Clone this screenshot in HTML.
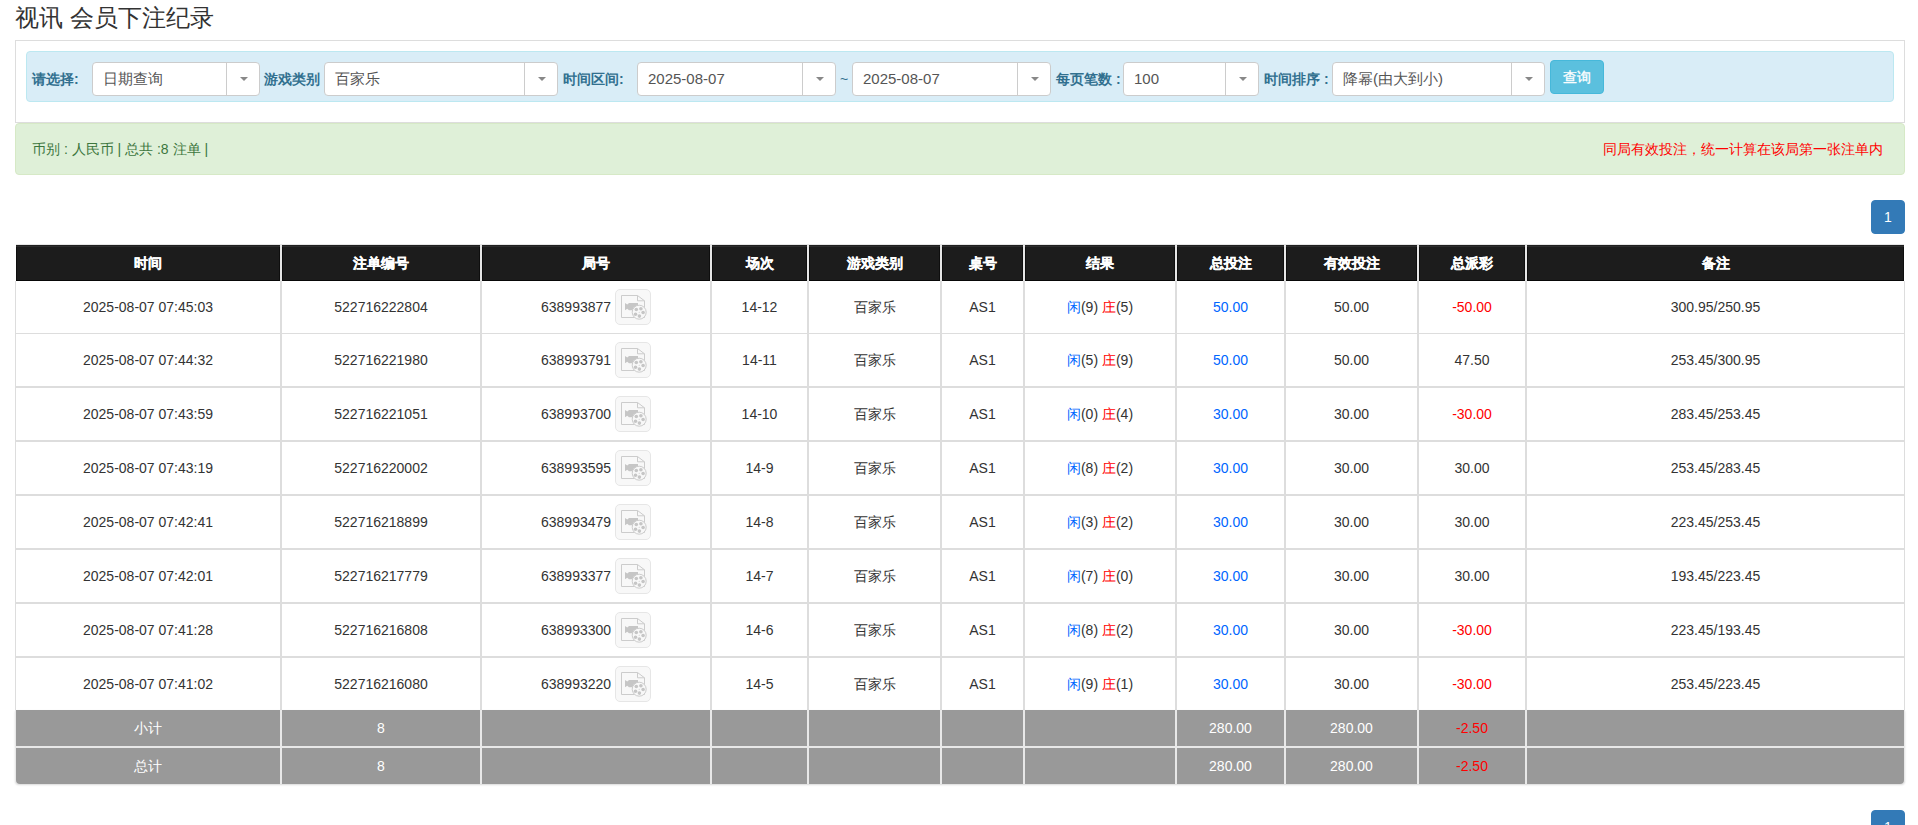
<!DOCTYPE html>
<html><head><meta charset="utf-8">
<style>
*{box-sizing:border-box;margin:0;padding:0}
html,body{width:1918px;height:825px;overflow:hidden;background:#fff}
body{font-family:"Liberation Sans",sans-serif;font-size:14px;color:#333;position:relative}
.abs{position:absolute}
#title{left:15px;top:1px;font-size:24px;line-height:34px;color:#333;white-space:nowrap}
#box{left:15px;top:40px;width:1890px;height:83px;border:1px solid #ddd}
#panel{left:26px;top:51px;width:1868px;height:51px;background:#d9edf7;border:1px solid #bce8f1;border-radius:4px}
.lbl{position:absolute;top:62px;height:34px;line-height:34px;font-weight:bold;color:#31708f;font-size:14px;white-space:nowrap}
.sel{position:absolute;top:62px;height:34px;background:#fff;border:1px solid #ccc;border-radius:4px}
.sel .t{position:absolute;left:10px;top:0;line-height:32px;font-size:15px;color:#555;white-space:nowrap}
.sel .d{position:absolute;top:0;bottom:0;width:1px;background:#ccc}
.sel .a{position:absolute;top:14px;width:0;height:0;border-left:4px solid transparent;border-right:4px solid transparent;border-top:4px solid #888}
#btn{left:1550px;top:60px;width:54px;height:34px;background:#5bc0de;border:1px solid #46b8da;border-radius:4px;color:#fff;text-align:center;line-height:32px;font-size:14px;-webkit-text-stroke:0.35px #fff}
#alert{left:15px;top:123px;width:1890px;height:52px;background:#dff0d8;border:1px solid #d6e9c6;border-radius:4px}
#alert .l{position:absolute;left:16px;top:0;line-height:50px;color:#3c763d;font-size:14px;white-space:nowrap}
#alert .r{position:absolute;right:21px;top:0;line-height:50px;color:#f00;font-size:14px;white-space:nowrap}
.pg{position:absolute;left:1871px;width:34px;height:34px;background:#337ab7;border:1px solid #337ab7;border-radius:4px;color:#fff;text-align:center;line-height:32px;font-size:14px}

.th{position:absolute;top:245px;-webkit-text-stroke:0.25px #fff;height:36px;background:#1c1c1c;color:#fff;font-weight:bold;text-align:center;line-height:36px;box-shadow:inset 0 1px 0 #1f1f1f,inset 0 2px 0 #2d2d2d,inset 0 -1px 0 #080808,inset 1px 0 0 #0e0e0e,inset -1px 0 0 #0e0e0e;white-space:nowrap}
.td{position:absolute;height:52px;line-height:52px;text-align:center;color:#333;white-space:nowrap}
.tf{position:absolute;height:36px;line-height:36px;text-align:center;color:#fff;background:#999;white-space:nowrap}
.bl{color:#0066ff}.rd{color:#f00}
.ic{display:inline-block;width:36px;height:36px;vertical-align:middle;position:relative;top:-1px}
.ic svg{display:block}
</style></head><body>
<div id="title" class="abs">视讯 会员下注纪录</div>
<div id="box" class="abs"></div>
<div id="panel" class="abs"></div>
<div class="lbl" style="left:32px">请选择:</div>
<div class="sel" style="left:92px;width:168px"><span class="t">日期查询</span><span class="d" style="left:133px"></span><span class="a" style="left:147px"></span></div>
<div class="lbl" style="left:264px">游戏类别</div>
<div class="sel" style="left:324px;width:234px"><span class="t">百家乐</span><span class="d" style="left:199px"></span><span class="a" style="left:213px"></span></div>
<div class="lbl" style="left:563px">时间区间:</div>
<div class="sel" style="left:637px;width:199px"><span class="t">2025-08-07</span><span class="d" style="left:164px"></span><span class="a" style="left:178px"></span></div>
<div class="lbl" style="left:840px;font-weight:normal;color:#31708f">~</div>
<div class="sel" style="left:852px;width:199px"><span class="t">2025-08-07</span><span class="d" style="left:164px"></span><span class="a" style="left:178px"></span></div>
<div class="lbl" style="left:1056px">每页笔数 :</div>
<div class="sel" style="left:1123px;width:136px"><span class="t">100</span><span class="d" style="left:101px"></span><span class="a" style="left:115px"></span></div>
<div class="lbl" style="left:1264px">时间排序 :</div>
<div class="sel" style="left:1332px;width:213px"><span class="t">降幂(由大到小)</span><span class="d" style="left:178px"></span><span class="a" style="left:192px"></span></div>
<div id="btn" class="abs">查询</div>
<div id="alert" class="abs"><span class="l">币别 : 人民币 | 总共 :8 注单 |</span><span class="r">同局有效投注，统一计算在该局第一张注单内</span></div>
<div class="pg" style="top:200px">1</div>
<div class="pg" style="top:810px">1</div>
<svg width="0" height="0" style="position:absolute"><defs><symbol id="vid" viewBox="0 0 36 36">
<rect x="0.5" y="0.5" width="35" height="35" rx="4.5" fill="#f8f8f8" stroke="#e6e6e6"/>
<path d="M6.5 6.5H22.5L29.5 11.8V28.5H6.5Z" fill="#f8f8f8" stroke="#cccccc"/>
<path d="M22.5 6.5V11.8H29.5" fill="none" stroke="#cccccc"/>
<path d="M10 14L12.3 15.6L14 14H23V21.3H14L12.3 19.7L10 21.3Z" fill="#c6c6c6"/>
<circle cx="24.2" cy="23.2" r="7" fill="#f8f8f8" stroke="#cccccc"/>
<circle cx="21.3" cy="20.5" r="1.8" fill="#c6c6c6"/><circle cx="25.9" cy="19.8" r="1.8" fill="#c6c6c6"/>
<circle cx="28.1" cy="23.5" r="1.8" fill="#c6c6c6"/><circle cx="24.4" cy="27.1" r="1.8" fill="#c6c6c6"/>
<circle cx="20.5" cy="25.2" r="1.8" fill="#c6c6c6"/><circle cx="24.2" cy="23.2" r="0.5" fill="#c6c6c6"/>
</symbol></defs></svg>
<div class="abs" style="left:15px;top:281px;width:1890px;height:429px;background:#fff;border-left:1px solid #ddd;border-right:1px solid #ddd"></div>
<div class="abs" style="left:16px;top:333px;width:1888px;height:1px;background:#ddd"></div>
<div class="abs" style="left:16px;top:386px;width:1888px;height:2px;background:#ddd"></div>
<div class="abs" style="left:16px;top:440px;width:1888px;height:2px;background:#ddd"></div>
<div class="abs" style="left:16px;top:494px;width:1888px;height:2px;background:#ddd"></div>
<div class="abs" style="left:16px;top:548px;width:1888px;height:2px;background:#ddd"></div>
<div class="abs" style="left:16px;top:602px;width:1888px;height:2px;background:#ddd"></div>
<div class="abs" style="left:16px;top:656px;width:1888px;height:2px;background:#ddd"></div>
<div class="abs" style="left:280px;top:281px;width:2px;height:429px;background:#ddd"></div>
<div class="abs" style="left:480px;top:281px;width:2px;height:429px;background:#ddd"></div>
<div class="abs" style="left:710px;top:281px;width:2px;height:429px;background:#ddd"></div>
<div class="abs" style="left:807px;top:281px;width:2px;height:429px;background:#ddd"></div>
<div class="abs" style="left:940px;top:281px;width:2px;height:429px;background:#ddd"></div>
<div class="abs" style="left:1023px;top:281px;width:2px;height:429px;background:#ddd"></div>
<div class="abs" style="left:1175px;top:281px;width:2px;height:429px;background:#ddd"></div>
<div class="abs" style="left:1284px;top:281px;width:2px;height:429px;background:#ddd"></div>
<div class="abs" style="left:1417px;top:281px;width:2px;height:429px;background:#ddd"></div>
<div class="abs" style="left:1525px;top:281px;width:2px;height:429px;background:#ddd"></div>
<div class="abs" style="left:16px;top:244px;width:1888px;height:37px;background:#e6e6e6"></div>
<div class="th" style="left:16px;width:264px">时间</div>
<div class="th" style="left:282px;width:198px">注单编号</div>
<div class="th" style="left:482px;width:228px">局号</div>
<div class="th" style="left:712px;width:95px">场次</div>
<div class="th" style="left:809px;width:131px">游戏类别</div>
<div class="th" style="left:942px;width:81px">桌号</div>
<div class="th" style="left:1025px;width:150px">结果</div>
<div class="th" style="left:1177px;width:107px">总投注</div>
<div class="th" style="left:1286px;width:131px">有效投注</div>
<div class="th" style="left:1419px;width:106px">总派彩</div>
<div class="th" style="left:1527px;width:377px">备注</div>
<div class="td" style="left:16px;top:281px;width:264px">2025-08-07 07:45:03</div>
<div class="td" style="left:282px;top:281px;width:198px">522716222804</div>
<div class="td" style="left:482px;top:281px;width:228px">638993877 <span class="ic"><svg width="36" height="36"><use href="#vid"/></svg></span></div>
<div class="td" style="left:712px;top:281px;width:95px">14-12</div>
<div class="td" style="left:809px;top:281px;width:131px">百家乐</div>
<div class="td" style="left:942px;top:281px;width:81px">AS1</div>
<div class="td" style="left:1025px;top:281px;width:150px"><span class="bl">闲</span>(9) <span class="rd">庄</span>(5)</div>
<div class="td" style="left:1177px;top:281px;width:107px"><span class="bl">50.00</span></div>
<div class="td" style="left:1286px;top:281px;width:131px">50.00</div>
<div class="td" style="left:1419px;top:281px;width:106px"><span class="rd">-50.00</span></div>
<div class="td" style="left:1527px;top:281px;width:377px">300.95/250.95</div>
<div class="td" style="left:16px;top:334px;width:264px">2025-08-07 07:44:32</div>
<div class="td" style="left:282px;top:334px;width:198px">522716221980</div>
<div class="td" style="left:482px;top:334px;width:228px">638993791 <span class="ic"><svg width="36" height="36"><use href="#vid"/></svg></span></div>
<div class="td" style="left:712px;top:334px;width:95px">14-11</div>
<div class="td" style="left:809px;top:334px;width:131px">百家乐</div>
<div class="td" style="left:942px;top:334px;width:81px">AS1</div>
<div class="td" style="left:1025px;top:334px;width:150px"><span class="bl">闲</span>(5) <span class="rd">庄</span>(9)</div>
<div class="td" style="left:1177px;top:334px;width:107px"><span class="bl">50.00</span></div>
<div class="td" style="left:1286px;top:334px;width:131px">50.00</div>
<div class="td" style="left:1419px;top:334px;width:106px">47.50</div>
<div class="td" style="left:1527px;top:334px;width:377px">253.45/300.95</div>
<div class="td" style="left:16px;top:388px;width:264px">2025-08-07 07:43:59</div>
<div class="td" style="left:282px;top:388px;width:198px">522716221051</div>
<div class="td" style="left:482px;top:388px;width:228px">638993700 <span class="ic"><svg width="36" height="36"><use href="#vid"/></svg></span></div>
<div class="td" style="left:712px;top:388px;width:95px">14-10</div>
<div class="td" style="left:809px;top:388px;width:131px">百家乐</div>
<div class="td" style="left:942px;top:388px;width:81px">AS1</div>
<div class="td" style="left:1025px;top:388px;width:150px"><span class="bl">闲</span>(0) <span class="rd">庄</span>(4)</div>
<div class="td" style="left:1177px;top:388px;width:107px"><span class="bl">30.00</span></div>
<div class="td" style="left:1286px;top:388px;width:131px">30.00</div>
<div class="td" style="left:1419px;top:388px;width:106px"><span class="rd">-30.00</span></div>
<div class="td" style="left:1527px;top:388px;width:377px">283.45/253.45</div>
<div class="td" style="left:16px;top:442px;width:264px">2025-08-07 07:43:19</div>
<div class="td" style="left:282px;top:442px;width:198px">522716220002</div>
<div class="td" style="left:482px;top:442px;width:228px">638993595 <span class="ic"><svg width="36" height="36"><use href="#vid"/></svg></span></div>
<div class="td" style="left:712px;top:442px;width:95px">14-9</div>
<div class="td" style="left:809px;top:442px;width:131px">百家乐</div>
<div class="td" style="left:942px;top:442px;width:81px">AS1</div>
<div class="td" style="left:1025px;top:442px;width:150px"><span class="bl">闲</span>(8) <span class="rd">庄</span>(2)</div>
<div class="td" style="left:1177px;top:442px;width:107px"><span class="bl">30.00</span></div>
<div class="td" style="left:1286px;top:442px;width:131px">30.00</div>
<div class="td" style="left:1419px;top:442px;width:106px">30.00</div>
<div class="td" style="left:1527px;top:442px;width:377px">253.45/283.45</div>
<div class="td" style="left:16px;top:496px;width:264px">2025-08-07 07:42:41</div>
<div class="td" style="left:282px;top:496px;width:198px">522716218899</div>
<div class="td" style="left:482px;top:496px;width:228px">638993479 <span class="ic"><svg width="36" height="36"><use href="#vid"/></svg></span></div>
<div class="td" style="left:712px;top:496px;width:95px">14-8</div>
<div class="td" style="left:809px;top:496px;width:131px">百家乐</div>
<div class="td" style="left:942px;top:496px;width:81px">AS1</div>
<div class="td" style="left:1025px;top:496px;width:150px"><span class="bl">闲</span>(3) <span class="rd">庄</span>(2)</div>
<div class="td" style="left:1177px;top:496px;width:107px"><span class="bl">30.00</span></div>
<div class="td" style="left:1286px;top:496px;width:131px">30.00</div>
<div class="td" style="left:1419px;top:496px;width:106px">30.00</div>
<div class="td" style="left:1527px;top:496px;width:377px">223.45/253.45</div>
<div class="td" style="left:16px;top:550px;width:264px">2025-08-07 07:42:01</div>
<div class="td" style="left:282px;top:550px;width:198px">522716217779</div>
<div class="td" style="left:482px;top:550px;width:228px">638993377 <span class="ic"><svg width="36" height="36"><use href="#vid"/></svg></span></div>
<div class="td" style="left:712px;top:550px;width:95px">14-7</div>
<div class="td" style="left:809px;top:550px;width:131px">百家乐</div>
<div class="td" style="left:942px;top:550px;width:81px">AS1</div>
<div class="td" style="left:1025px;top:550px;width:150px"><span class="bl">闲</span>(7) <span class="rd">庄</span>(0)</div>
<div class="td" style="left:1177px;top:550px;width:107px"><span class="bl">30.00</span></div>
<div class="td" style="left:1286px;top:550px;width:131px">30.00</div>
<div class="td" style="left:1419px;top:550px;width:106px">30.00</div>
<div class="td" style="left:1527px;top:550px;width:377px">193.45/223.45</div>
<div class="td" style="left:16px;top:604px;width:264px">2025-08-07 07:41:28</div>
<div class="td" style="left:282px;top:604px;width:198px">522716216808</div>
<div class="td" style="left:482px;top:604px;width:228px">638993300 <span class="ic"><svg width="36" height="36"><use href="#vid"/></svg></span></div>
<div class="td" style="left:712px;top:604px;width:95px">14-6</div>
<div class="td" style="left:809px;top:604px;width:131px">百家乐</div>
<div class="td" style="left:942px;top:604px;width:81px">AS1</div>
<div class="td" style="left:1025px;top:604px;width:150px"><span class="bl">闲</span>(8) <span class="rd">庄</span>(2)</div>
<div class="td" style="left:1177px;top:604px;width:107px"><span class="bl">30.00</span></div>
<div class="td" style="left:1286px;top:604px;width:131px">30.00</div>
<div class="td" style="left:1419px;top:604px;width:106px"><span class="rd">-30.00</span></div>
<div class="td" style="left:1527px;top:604px;width:377px">223.45/193.45</div>
<div class="td" style="left:16px;top:658px;width:264px">2025-08-07 07:41:02</div>
<div class="td" style="left:282px;top:658px;width:198px">522716216080</div>
<div class="td" style="left:482px;top:658px;width:228px">638993220 <span class="ic"><svg width="36" height="36"><use href="#vid"/></svg></span></div>
<div class="td" style="left:712px;top:658px;width:95px">14-5</div>
<div class="td" style="left:809px;top:658px;width:131px">百家乐</div>
<div class="td" style="left:942px;top:658px;width:81px">AS1</div>
<div class="td" style="left:1025px;top:658px;width:150px"><span class="bl">闲</span>(9) <span class="rd">庄</span>(1)</div>
<div class="td" style="left:1177px;top:658px;width:107px"><span class="bl">30.00</span></div>
<div class="td" style="left:1286px;top:658px;width:131px">30.00</div>
<div class="td" style="left:1419px;top:658px;width:106px"><span class="rd">-30.00</span></div>
<div class="td" style="left:1527px;top:658px;width:377px">253.45/223.45</div>
<div class="abs" style="left:15px;top:710px;width:1890px;height:74px;background:#e8e8e8;border-radius:0 0 4px 4px;box-shadow:0 1px 2px rgba(0,0,0,.15)"></div>
<div class="tf" style="left:16px;top:710px;width:264px;">小计</div>
<div class="tf" style="left:282px;top:710px;width:198px;">8</div>
<div class="tf" style="left:482px;top:710px;width:228px;"></div>
<div class="tf" style="left:712px;top:710px;width:95px;"></div>
<div class="tf" style="left:809px;top:710px;width:131px;"></div>
<div class="tf" style="left:942px;top:710px;width:81px;"></div>
<div class="tf" style="left:1025px;top:710px;width:150px;"></div>
<div class="tf" style="left:1177px;top:710px;width:107px;">280.00</div>
<div class="tf" style="left:1286px;top:710px;width:131px;">280.00</div>
<div class="tf" style="left:1419px;top:710px;width:106px;"><span class="rd">-2.50</span></div>
<div class="tf" style="left:1527px;top:710px;width:377px;"></div>
<div class="tf" style="left:16px;top:748px;width:264px;border-bottom-left-radius:4px;">总计</div>
<div class="tf" style="left:282px;top:748px;width:198px;">8</div>
<div class="tf" style="left:482px;top:748px;width:228px;"></div>
<div class="tf" style="left:712px;top:748px;width:95px;"></div>
<div class="tf" style="left:809px;top:748px;width:131px;"></div>
<div class="tf" style="left:942px;top:748px;width:81px;"></div>
<div class="tf" style="left:1025px;top:748px;width:150px;"></div>
<div class="tf" style="left:1177px;top:748px;width:107px;">280.00</div>
<div class="tf" style="left:1286px;top:748px;width:131px;">280.00</div>
<div class="tf" style="left:1419px;top:748px;width:106px;"><span class="rd">-2.50</span></div>
<div class="tf" style="left:1527px;top:748px;width:377px;border-bottom-right-radius:4px;"></div>
</body></html>
